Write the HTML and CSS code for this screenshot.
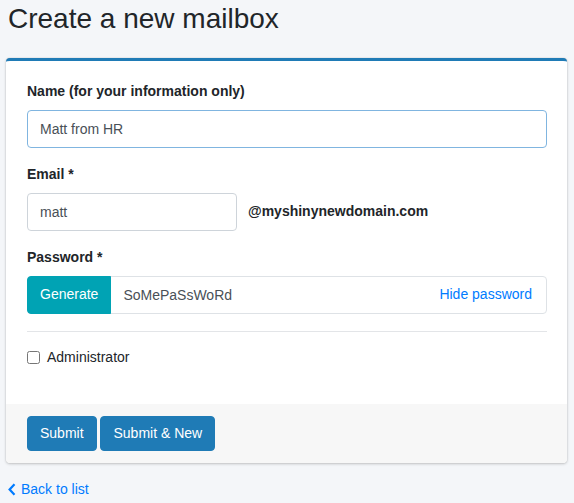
FILE: index.html
```html
<!DOCTYPE html>
<html lang="en">
<head>
  <meta charset="UTF-8">
  <meta name="viewport" content="width=device-width, initial-scale=1.0">
  <title>Create a new mailbox</title>
  <link rel="stylesheet" href="styles.css">
</head>
<body>
  <div class="page">
    <h1>Create a new mailbox</h1>

    <form class="card" id="mailboxForm">
      <div class="card-body">
        <div class="form-group">
          <label for="name">Name (for your information only)</label>
          <input type="text" id="name" class="form-control highlight" value="Matt from HR">
        </div>

        <div class="form-group">
          <label for="email">Email *</label>
          <div class="email-row">
            <input type="text" id="email" class="form-control email-input" value="matt">
            <span class="domain">@myshinynewdomain.com</span>
          </div>
        </div>

        <div class="form-group">
          <label for="password">Password *</label>
          <div class="input-group">
            <button type="button" class="btn btn-info">Generate</button>
            <input type="text" id="password" class="group-input" value="SoMePaSsWoRd">
            <a href="#" class="toggle-link">Hide password</a>
          </div>
        </div>

        <hr>

        <div class="form-group check-row">
          <input type="checkbox" id="admin">
          <label for="admin" class="check-label">Administrator</label>
        </div>
      </div>

      <div class="card-footer">
        <button type="submit" class="btn btn-primary">Submit</button>
        <button type="button" class="btn btn-primary">Submit &amp; New</button>
      </div>
    </form>

    <a href="#" class="back-link">
      <svg width="8" height="13" viewBox="0 0 8 13" aria-hidden="true">
        <path d="M6.5 1.2 1.6 6.5l4.9 5.3" fill="none" stroke="currentColor" stroke-width="2.2" stroke-linejoin="miter"/>
      </svg>
      Back to list
    </a>
  </div>
</body>
</html>
```

FILE: styles.css
```css
body {
  font-family: "Liberation Sans", Arial, sans-serif;
  font-size: 14px;
  line-height: 1.5;
  color: #212529;
  background-color: #f4f6f9;
  margin: 0;
  padding: 0;
}

.page {
  padding: 0 7px 0 6px;
}

h1 {
  font-size: 28px;
  font-weight: 400;
  line-height: 1.2;
  margin: 2px 0 22px 2px;
}

.card {
  background-color: white;
  border-top: 3px solid #1f7bb6;
  border-radius: 4px;
  box-shadow: 0 0 1px rgba(0, 0, 0, 0.25), 0 1px 3px rgba(0, 0, 0, 0.2);
  margin: 0;
}

.card-body {
  padding: 20px 20px 20px 21px;
}

.form-group {
  margin-bottom: 16px;
}

label {
  display: block;
  font-weight: 700;
  margin-bottom: 8px;
}

.form-control {
  display: block;
  width: 100%;
  height: 38px;
  padding: 6px 12px;
  font-family: inherit;
  font-size: 14px;
  color: #495057;
  background-color: white;
  border: 1px solid #ced4da;
  border-radius: 4px;
  box-sizing: border-box;
}

.form-control.highlight {
  border-color: #80b5e0;
}

.email-row {
  display: flex;
  align-items: center;
  gap: 11px;
}

.email-input {
  width: 210px;
}

.domain {
  font-weight: 700;
}

.input-group {
  display: flex;
  align-items: center;
  height: 38px;
  border: 1px solid #dee2e6;
  border-radius: 4px;
  box-sizing: border-box;
}

.input-group .btn-info {
  height: 38px;
  margin: -1px 0 -1px -1px;
  border-radius: 4px 0 0 4px;
}

.group-input {
  flex: 1;
  border: none;
  outline: none;
  font-family: inherit;
  font-size: 14px;
  color: #495057;
  padding: 6px 12px;
  background: transparent;
}

.toggle-link {
  color: #007bff;
  text-decoration: none;
  padding-right: 14px;
}

hr {
  border: 0;
  border-top: 1px solid #e3e5e8;
  margin: 17px 0 15px;
}

.check-row {
  display: flex;
  align-items: center;
}

.check-row input {
  width: 13px;
  height: 13px;
  margin: 0 7px 0 0;
}

.check-label {
  font-weight: 400;
  margin: 0;
}

.card-footer {
  background-color: #f7f7f7;
  padding: 12px 20px 12px 21px;
  border-radius: 0 0 4px 4px;
}

.btn {
  display: inline-block;
  font-family: inherit;
  font-size: 14px;
  line-height: 1.5;
  padding: 6px 12px;
  border: 1px solid transparent;
  border-radius: 4px;
  color: white;
  cursor: pointer;
}

.btn-primary {
  background-color: #1f7bb6;
  border-color: #1f7bb6;
}

.btn-info {
  background-color: #00a3b4;
  border-color: #00a3b4;
}

.back-link {
  display: inline-flex;
  align-items: center;
  gap: 5px;
  margin: 16px 0 0 2px;
  color: #007bff;
  text-decoration: none;
}
```
